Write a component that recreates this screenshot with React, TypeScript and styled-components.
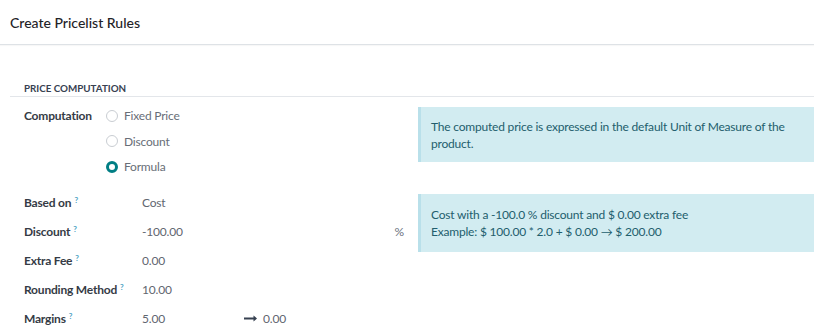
import styled, { createGlobalStyle } from "styled-components";

const GlobalStyle = createGlobalStyle`
  html, body {
    margin: 0;
    padding: 0;
    background: #fff;
  }
  body {
    font-family: "Lato", "Liberation Sans", sans-serif;
    color: #374151;
    overflow: hidden;
  }
`;

const Header = styled.header`
  height: 44px;
  display: flex;
  align-items: center;
  padding-left: 10px;
  border-bottom: 1px solid #dee2e6;
  box-shadow: 0 1px 1px rgba(0, 0, 0, 0.03);
`;

const Title = styled.h1`
  margin: 0;
  font-size: 14px;
  font-weight: 500;
  color: #1f2328;
`;

const Body = styled.div`
  padding: 37px 0 0 10px;
`;

const SectionTitle = styled.div`
  padding: 0 0 2px 14px;
  border-bottom: 1px solid #e3e6ea;
  font-size: 9.8px;
  font-weight: 700;
  color: #374151;
  text-transform: uppercase;
`;

const Row = styled.div<{ $top: number }>`
  display: grid;
  grid-template-columns: 380px 1fr;
  gap: 0 14px;
  padding: ${(p) => p.$top}px 0 0 14px;
`;

const Fields = styled.div<{ $label: number }>`
  display: grid;
  grid-template-columns: ${(p) => p.$label}px 1fr;
  align-content: start;
`;

const Label = styled.div<{ $h: number }>`
  height: ${(p) => p.$h}px;
  display: flex;
  align-items: center;
  font-size: 12px;
  letter-spacing: -0.2px;
  font-weight: 700;
  color: #353b45;
  white-space: nowrap;
`;

const Help = styled.sup`
  margin-left: 3px;
  font-size: 8px;
  font-weight: 700;
  color: #4fa3c4;
  align-self: flex-start;
  margin-top: 7px;
`;

const RadioList = styled.div`
  display: flex;
  flex-direction: column;
`;

const RadioItem = styled.label`
  height: 25.5px;
  display: flex;
  align-items: center;
  gap: 6px;
  font-size: 12px;
  letter-spacing: -0.2px;
  color: #686e77;
`;

const RadioDot = styled.span<{ $on?: boolean }>`
  width: 12px;
  height: 12px;
  box-sizing: border-box;
  border-radius: 50%;
  border: ${(p) => (p.$on ? "3.5px solid #017e84" : "1px solid #c9cdd2")};
  background: #fff;
`;

const Value = styled.div<{ $h: number }>`
  height: ${(p) => p.$h}px;
  display: flex;
  align-items: center;
  font-size: 12px;
  letter-spacing: -0.2px;
  color: #5f6670;
`;

const Amount = styled.span<{ $w?: number }>`
  width: ${(p) => (p.$w ? `${p.$w}px` : "auto")};
`;

const Unit = styled.span`
  margin-left: auto;
  color: #6b7280;
`;

const Arrow = styled.span`
  margin-right: 6px;
  display: inline-flex;
  color: #374151;
`;

const Alert = styled.div<{ $mt: number; $h: number }>`
  margin-top: ${(p) => p.$mt}px;
  margin-right: -14px;
  height: ${(p) => p.$h}px;
  box-sizing: border-box;
  padding: 0 10px;
  display: flex;
  flex-direction: column;
  justify-content: center;
  background: #d2ecf1;
  border-left: 3px solid #b9e0ea;
  color: #225e6d;
  font-size: 12px;
  letter-spacing: -0.2px;
  line-height: 17px;
`;

const fields: { label: string; value: string; unit?: string; to?: string }[] = [
  { label: "Based on", value: "Cost" },
  { label: "Discount", value: "-100.00", unit: "%" },
  { label: "Extra Fee", value: "0.00" },
  { label: "Rounding Method", value: "10.00" },
  { label: "Margins", value: "5.00", to: "0.00" },
];

function LongArrow() {
  return (
    <svg width="13" height="7" viewBox="0 0 13 7">
      <path d="M0 2.6h9.5V0.4L13 3.5 9.5 6.6V4.4H0z" fill="currentColor" />
    </svg>
  );
}

export default function App() {
  return (
    <>
      <GlobalStyle />
      <Header>
        <Title>Create Pricelist Rules</Title>
      </Header>
      <Body>
        <SectionTitle>Price Computation</SectionTitle>
        <Row $top={6}>
          <Fields $label={82}>
            <Label $h={25.5}>Computation</Label>
            <RadioList>
              <RadioItem>
                <RadioDot />
                Fixed Price
              </RadioItem>
              <RadioItem>
                <RadioDot />
                Discount
              </RadioItem>
              <RadioItem>
                <RadioDot $on />
                Formula
              </RadioItem>
            </RadioList>
          </Fields>
          <Alert $mt={4} $h={55}>
            The computed price is expressed in the default Unit of Measure of the product.
          </Alert>
        </Row>
        <Row $top={8}>
          <Fields $label={118}>
            {fields.map((f) => (
              <>
                <Label key={f.label} $h={29}>
                  {f.label}
                  <Help>?</Help>
                </Label>
                <Value key={f.label + "v"} $h={29}>
                  <Amount $w={f.to ? 102 : undefined}>{f.value}</Amount>
                  {f.unit && <Unit>{f.unit}</Unit>}
                  {f.to && (
                    <>
                      <Arrow>
                        <LongArrow />
                      </Arrow>
                      {f.to}
                    </>
                  )}
                </Value>
              </>
            ))}
          </Fields>
          <Alert $mt={6} $h={58}>
            <div>Cost with a -100.0 % discount and $ 0.00 extra fee</div>
            <div>Example: $ 100.00 * 2.0 + $ 0.00 → $ 200.00</div>
          </Alert>
        </Row>
      </Body>
    </>
  );
}
